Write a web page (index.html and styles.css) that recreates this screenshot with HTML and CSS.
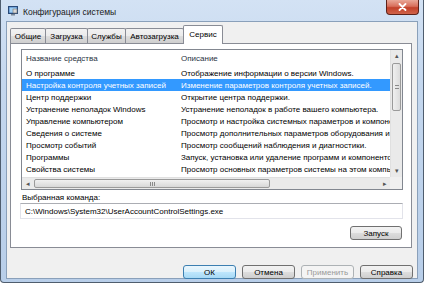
FILE: index.html
```html
<!DOCTYPE html>
<html lang="ru">
<head>
<meta charset="utf-8">
<title>Конфигурация системы</title>
<link rel="stylesheet" href="styles.css">
</head>
<body>
<div class="window">
  <div class="titlebar">
    <svg class="app-icon" width="10" height="10" viewBox="0 0 10 10">
      <rect x="0.5" y="0.5" width="9" height="7" fill="#4a7fc0" stroke="#2a4a78"/>
      <rect x="1.5" y="1.5" width="7" height="5" fill="#9fd0f5"/>
      <rect x="3" y="8" width="4" height="1.5" fill="#7a8797"/>
      <rect x="5" y="3" width="4" height="4" fill="#d8d8d8" stroke="#777" stroke-width="0.6"/>
    </svg>
    <span class="title">Конфигурация системы</span>
    <div class="close">
      <svg width="9" height="8" viewBox="0 0 9 8"><path d="M1.5 1 L7.5 7 M7.5 1 L1.5 7" stroke="#fff" stroke-width="1.8" stroke-linecap="round"/></svg>
    </div>
  </div>
  <div class="client">
    <div class="tabs">
      <div class="tab w1">Общие</div>
      <div class="tab w2">Загрузка</div>
      <div class="tab w3">Службы</div>
      <div class="tab w4">Автозагрузка</div>
      <div class="tab active w5">Сервис</div>
    </div>
    <div class="panel">
      <div class="listbox">
        <div class="list-main">
          <div class="list-head">
            <div class="c1">Название средства</div>
            <div class="c2">Описание</div>
          </div>
          <div class="list-body">
            <div class="row"><div class="c1">О программе</div><div class="c2">Отображение информации о версии Windows.</div></div>
            <div class="row sel"><div class="c1">Настройка контроля учетных записей</div><div class="c2">Изменение параметров контроля учетных записей.</div></div>
            <div class="row"><div class="c1">Центр поддержки</div><div class="c2">Открытие центра поддержки.</div></div>
            <div class="row"><div class="c1">Устранение неполадок Windows</div><div class="c2">Устранение неполадок в работе вашего компьютера.</div></div>
            <div class="row"><div class="c1">Управление компьютером</div><div class="c2">Просмотр и настройка системных параметров и компонентов.</div></div>
            <div class="row"><div class="c1">Сведения о системе</div><div class="c2">Просмотр дополнительных параметров оборудования и программ.</div></div>
            <div class="row"><div class="c1">Просмотр событий</div><div class="c2">Просмотр сообщений наблюдения и диагностики.</div></div>
            <div class="row"><div class="c1">Программы</div><div class="c2">Запуск, установка или удаление программ и компонентов Windows.</div></div>
            <div class="row"><div class="c1">Свойства системы</div><div class="c2">Просмотр основных параметров системы на этом компьютере.</div></div>
          </div>
        </div>
        <div class="vscroll">
          <div class="arrow">▴</div>
          <div class="vtrack"><div class="vthumb"><span class="grip-h"></span></div></div>
          <div class="arrow">▾</div>
        </div>
        <div class="hscroll">
          <div class="arrow">◂</div>
          <div class="htrack"><div class="hthumb"><span class="grip-v"></span></div></div>
          <div class="arrow">▸</div>
        </div>
        <div class="corner"></div>
      </div>
      <div class="cmd-label">Выбранная команда:</div>
      <div class="cmd-box">C:\Windows\System32\UserAccountControlSettings.exe</div>
      <div class="run-row"><div class="btn run">Запуск</div></div>
    </div>
    <div class="buttons">
      <div class="btn default">ОК</div>
      <div class="btn">Отмена</div>
      <div class="btn disabled">Применить</div>
      <div class="btn">Справка</div>
    </div>
  </div>
</div>
</body>
</html>
```
FILE: styles.css
```css
html, body {
  margin: 0;
  padding: 0;
}
body {
  width: 424px;
  height: 283px;
  overflow: hidden;
  font-family: "Liberation Sans", Arial, sans-serif;
  font-size: 8px;
  color: #000;
  background: #fff;
}
.window {
  width: 424px;
  height: 283px;
  box-sizing: border-box;
  border: 1px solid #4f5d6e;
  border-top: none;
  border-radius: 0 0 4px 4px;
  background: linear-gradient(to bottom, #d3e2f4 0%, #c4d7ee 30%, #b8cee9 100%);
  padding: 0 5px 3px 5px;
  display: flex;
  flex-direction: column;
}
.titlebar {
  height: 21px;
  flex: none;
  display: flex;
  align-items: flex-start;
}
.app-icon {
  margin: 6px 0 0 2px;
}
.title {
  margin: 7px 0 0 5px;
  font-size: 8.5px;
  color: #1a1a1a;
}
.close {
  margin-left: auto;
  margin-right: -1px;
  width: 33px;
  height: 15px;
  box-sizing: border-box;
  border: 1px solid #5e2219;
  border-top: none;
  border-radius: 0 0 4px 4px;
  background: linear-gradient(to bottom, #e9a898 0%, #d86f5b 45%, #c2412a 55%, #d0634a 100%);
  display: flex;
  align-items: center;
  justify-content: center;
}
.client {
  flex: 1;
  background: #f0f0f0;
  border: 1px solid #8aa0ba;
  display: flex;
  flex-direction: column;
  padding: 3px 4px 0 3px;
  min-height: 0;
}
.tabs {
  height: 18px;
  flex: none;
  display: flex;
  align-items: flex-end;
  position: relative;
  z-index: 1;
}
.tab {
  height: 15px;
  box-sizing: border-box;
  border: 1px solid #898c95;
  border-bottom: none;
  margin-right: -1px;
  background: linear-gradient(to bottom, #f2f2f2 0%, #ebebeb 50%, #dddddd 51%, #cfcfcf 100%);
  display: flex;
  align-items: center;
  justify-content: center;
  font-size: 8px;
  border-radius: 2px 2px 0 0;
}
.tab.active {
  height: 19px;
  margin-bottom: -1px;
  background: #fff;
  padding-bottom: 2px;
}
.w1 { width: 36px; }
.w2 { width: 43px; }
.w3 { width: 39px; }
.w4 { width: 59px; }
.w5 { width: 40px; }
.panel {
  height: 205px;
  flex: none;
  box-sizing: border-box;
  margin-right: 1px;
  background: #fff;
  border: 1px solid #898c95;
  padding: 5px 8px 0 10px;
  display: flex;
  flex-direction: column;
}
.listbox {
  height: 141px;
  box-sizing: border-box;
  border: 1px solid #828790;
  display: grid;
  grid-template-columns: 1fr 12px;
  grid-template-rows: 1fr 12px;
  overflow: hidden;
}
.list-main {
  overflow: hidden;
  min-width: 0;
}
.list-head {
  height: 17px;
  display: flex;
  align-items: center;
  color: #2a3342;
}
.row {
  height: 12px;
  display: flex;
  align-items: center;
  white-space: nowrap;
}
.c1 {
  width: 155px;
  flex: none;
  padding-left: 4px;
  box-sizing: border-box;
  white-space: nowrap;
}
.c2 {
  padding-left: 4px;
  white-space: nowrap;
}
.row.sel {
  background: #3399ff;
  color: #fff;
}
.vscroll, .hscroll {
  background: #eaeaea;
  display: flex;
}
.vscroll {
  flex-direction: column;
  border-left: 1px solid #e0e0e0;
}
.hscroll {
  grid-column: 1;
  border-top: 1px solid #e0e0e0;
}
.corner {
  background: #f0f0f0;
}
.arrow {
  width: 11px;
  height: 12px;
  flex: none;
  font-size: 7px;
  color: #555;
  display: flex;
  align-items: center;
  justify-content: center;
}
.vtrack {
  flex: 1;
  padding: 1px 1px;
}
.vthumb {
  height: 48px;
  box-sizing: border-box;
  border: 1px solid #9a9a9a;
  border-radius: 2px;
  background: linear-gradient(to right, #f0f0f0, #dcdcdc);
  display: flex;
  align-items: center;
  justify-content: center;
}
.grip-h {
  width: 4px;
  height: 4px;
  border-top: 1px solid #8a8a8a;
  border-bottom: 1px solid #8a8a8a;
  box-sizing: border-box;
}
.htrack {
  flex: 1;
  padding: 1px 1px;
}
.hthumb {
  width: 236px;
  height: 100%;
  box-sizing: border-box;
  border: 1px solid #9a9a9a;
  border-radius: 2px;
  background: linear-gradient(to bottom, #f0f0f0, #d8d8d8);
  display: flex;
  align-items: center;
  justify-content: center;
}
.grip-v {
  width: 5px;
  height: 4px;
  border-left: 1px solid #8a8a8a;
  border-right: 1px solid #8a8a8a;
  box-sizing: border-box;
  background: linear-gradient(to right, transparent 40%, #8a8a8a 40%, #8a8a8a 60%, transparent 60%);
}
.cmd-label {
  margin: 2px 0 0 1px;
  height: 11px;
  line-height: 11px;
}
.cmd-box {
  height: 16px;
  box-sizing: border-box;
  border: 1px solid #e2e3ea;
  border-top-color: #abadb3;
  padding-left: 4px;
  display: flex;
  align-items: center;
  margin-left: -1px;
}
.run-row {
  display: flex;
  justify-content: flex-end;
  margin-top: 7px;
  padding-right: 1px;
}
.btn {
  height: 14px;
  box-sizing: border-box;
  border: 1px solid #707070;
  border-radius: 3px;
  background: linear-gradient(to bottom, #f2f2f2 0%, #ebebeb 50%, #dddddd 51%, #cfcfcf 100%);
  display: flex;
  align-items: center;
  justify-content: center;
  font-size: 8px;
}
.run {
  width: 52px;
}
.buttons {
  margin-top: 17px;
  display: flex;
  justify-content: flex-end;
  gap: 6px;
}
.buttons .btn {
  width: 53px;
}
.btn.default {
  border-color: #3c7fb1;
  background: linear-gradient(to bottom, #eaf6fd 0%, #d9f0fc 50%, #bee6fd 51%, #a7d9f5 100%);
}
.btn.disabled {
  border-color: #adb2b5;
  background: #f4f4f4;
  color: #9a9a9a;
}
```
